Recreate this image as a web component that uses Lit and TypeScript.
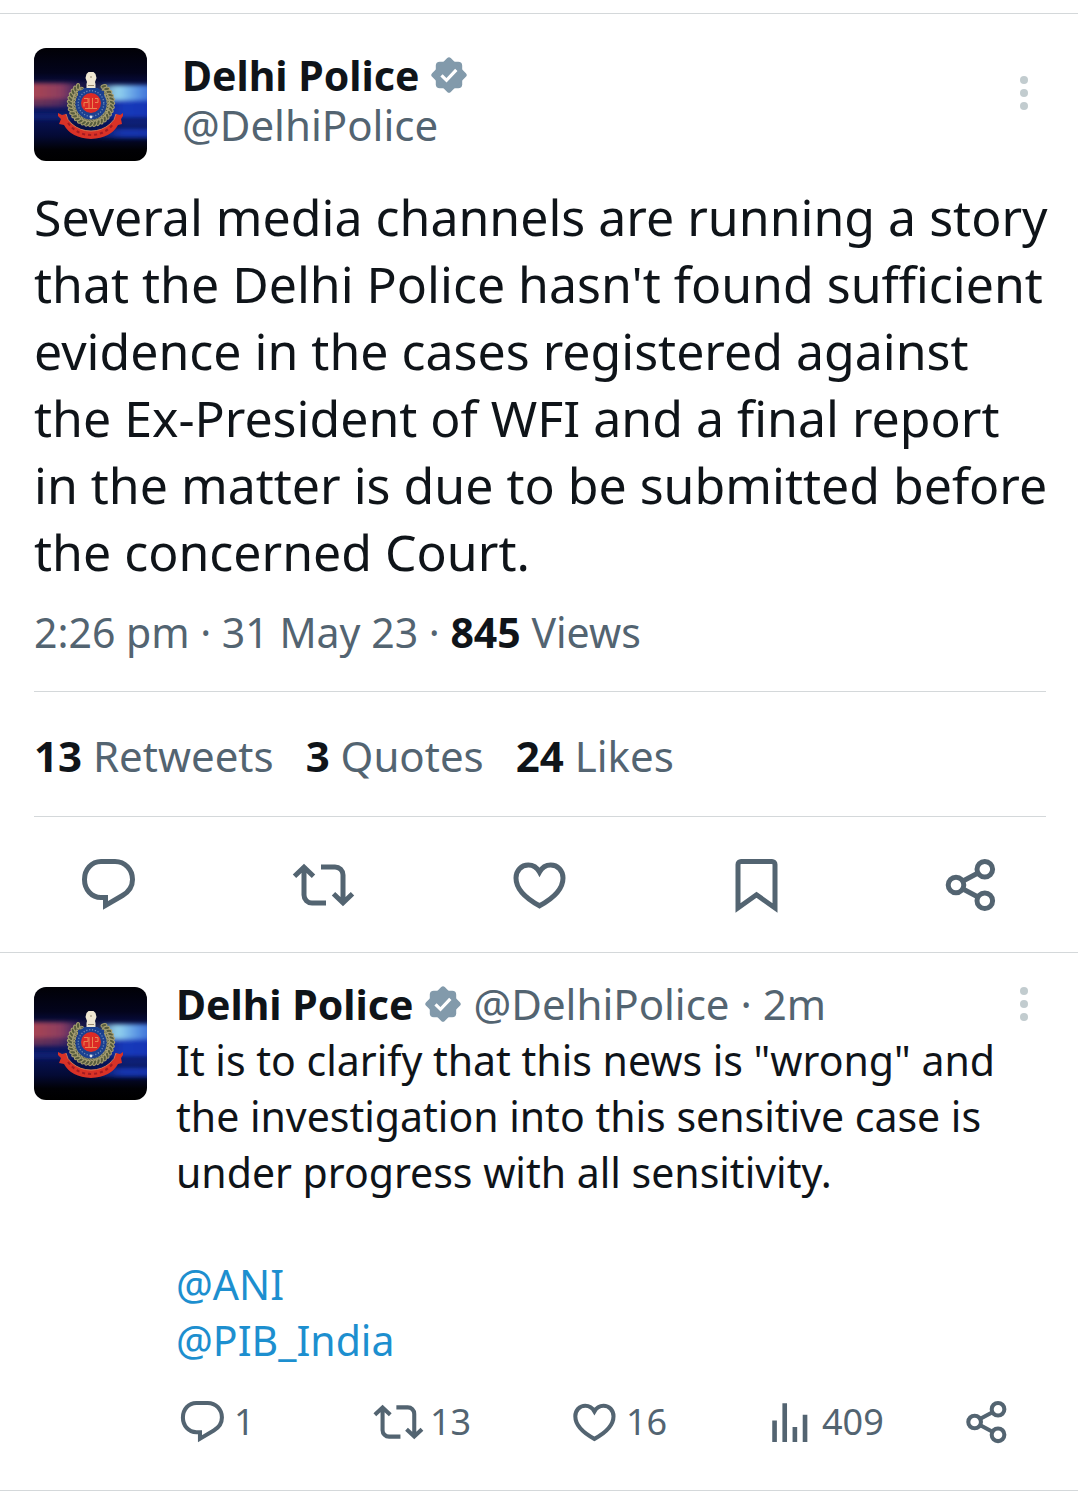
import { LitElement, html, svg, css } from "lit";
import { customElement, property } from "lit/decorators.js";

const icons: Record<string, unknown> = {
  reply: svg`<path d="M25 8.500h14c10 0 17.500 8 17.500 18 0 7.500-4 12.500-10 16L29.500 52.500v-8H25c-9.500 0-16.500-8-16.500-18s7-18 16.500-18z"/>`,
  retweet: svg`<path d="M35 50H21a8 8 0 0 1-8-8V15M3.500 23.200L13 14.300l9.500 8.900M30 14h14a8 8 0 0 1 8 8v27M42.500 40.800L52 49.700l9.500-8.900"/>`,
  like: svg`<path d="M32.500 19C30 14.500 26 12 21.300 12 14.300 12 9 17.500 9 25c0 11 10 20.500 23.500 27.800C46 45.500 56 36 56 25c0-7.500-5.300-13-12.300-13C39 12 35 14.500 32.500 19z"/>`,
  bookmark: svg`<path d="M15 55V11.500a3 3 0 0 1 3-3h31a3 3 0 0 1 3 3V55L33.500 41.800z"/>`,
  share: svg`<circle cx="18" cy="32" r="7.800"/><circle cx="46.800" cy="16.300" r="7.800"/><circle cx="46.800" cy="47.700" r="7.800"/><path d="M25 28l15-8M25 36l15 8"/>`,
  views: svg`<path d="M13 56.500V30M25.500 56.500V9M38 56.500V38M50.500 56.500V23" stroke-width="5.700"/>`,
};

@customElement("tweet-icon")
class TweetIcon extends LitElement {
  @property() name = "reply";
  static styles = css`
    :host { display: block; width: 64px; height: 64px; flex: none; }
    svg { display: block; width: 100%; height: 100%; fill: none; stroke: #536471; stroke-width: 5; stroke-miterlimit: 10; }
  `;
  render() {
    return html`<svg viewBox="0 0 64 64" aria-hidden="true">${icons[this.name]}</svg>`;
  }
}

@customElement("verified-badge")
class VerifiedBadge extends LitElement {
  static styles = css`
    :host { display: block; width: 36px; height: 36px; flex: none; }
    svg { display: block; width: 100%; height: 100%; }
  `;
  render() {
    return html`<svg viewBox="0 0 36 36" role="img" aria-label="Verified account">
      <g fill="#829aab">
        <rect x="4.800" y="4.800" width="26.400" height="26.400" rx="4"/>
        <rect x="4.800" y="4.800" width="26.400" height="26.400" rx="2.500" transform="rotate(45 18 18)"/>
      </g>
      <path d="M10.500 18.300l5 5L25.300 12.800" fill="none" stroke="#fff" stroke-width="3.200"/>
    </svg>`;
  }
}

@customElement("police-avatar")
class PoliceAvatar extends LitElement {
  static styles = css`
    :host { display: block; width: 113px; height: 113px; flex: none; border-radius: 12px; overflow: hidden; }
    svg { display: block; width: 100%; height: 100%; }
  `;
  render() {
    const leaves = Array.from({ length: 29 }, (_, i) => -52 + i * 10.14);
    return html`<svg viewBox="0 0 113 113" role="img" aria-label="Delhi Police emblem">
      <defs>
        <linearGradient id="sky" x2="0" y2="1">
          <stop offset="0" stop-color="#010106"/><stop offset=".22" stop-color="#03041c"/>
          <stop offset=".38" stop-color="#0a1258"/><stop offset=".58" stop-color="#081560"/>
          <stop offset=".78" stop-color="#040a34"/><stop offset=".9" stop-color="#010105"/>
          <stop offset="1" stop-color="#000"/>
        </linearGradient>
        <linearGradient id="red"><stop offset="0" stop-color="#b04850"/><stop offset=".6" stop-color="#8a3c60"/><stop offset="1" stop-color="#5b3a80" stop-opacity="0"/></linearGradient>
        <linearGradient id="cyan"><stop offset="0" stop-color="#8fc0ec" stop-opacity="0"/><stop offset=".35" stop-color="#9bdcf0"/><stop offset=".65" stop-color="#5a96e4"/><stop offset="1" stop-color="#2850cc"/></linearGradient>
        <linearGradient id="blue"><stop offset="0" stop-color="#1238b8" stop-opacity="0"/><stop offset=".5" stop-color="#1a40cc"/><stop offset="1" stop-color="#1238c0"/></linearGradient>
        <filter id="soft" x="-20%" y="-60%" width="140%" height="220%"><feGaussianBlur stdDeviation="4 2"/></filter>
        <filter id="fine"><feGaussianBlur stdDeviation=".4"/></filter>
      </defs>
      <rect width="113" height="113" fill="url(#sky)"/>
      <g filter="url(#soft)">
        <rect x="-8" y="35" width="62" height="16" fill="url(#red)"/>
        <rect x="-8" y="51" width="56" height="8" fill="url(#red)" opacity=".6"/>
        <rect x="58" y="37" width="68" height="16" fill="url(#cyan)"/>
        <rect x="52" y="52" width="74" height="18" fill="url(#blue)" opacity=".85"/>
        <rect x="60" y="73" width="66" height="4" fill="url(#blue)" opacity=".5"/>
        <rect x="50" y="80" width="76" height="10" fill="url(#blue)" opacity=".8"/>
        <rect x="-8" y="66" width="50" height="5" fill="#1a2d88" opacity=".6"/>
      </g>
      <g filter="url(#fine)">
        <circle cx="57" cy="55" r="19.500" fill="none" stroke="#10183c" stroke-width="7" opacity=".5"/>
        <g fill="#575c3e" stroke="#a8a070" stroke-width="1">
          ${leaves.map((a) => svg`<g transform="rotate(${a} 57 55)"><ellipse cx="78" cy="55" rx="3" ry="1.700" transform="rotate(38 78 55)"/><ellipse cx="74" cy="57" rx="1.700" ry="1" transform="rotate(-30 74 57)"/></g>`)}
        </g>
        <path d="M44 43q4 0 6-3h14q2 3 6 3v13H44z" fill="#1a4090"/>
        <circle cx="57" cy="56" r="15.500" fill="#1a4090"/>
        <circle cx="57" cy="55.500" r="12.800" fill="none" stroke="#6c88b8" stroke-width="1.300" stroke-dasharray="1.200 1.700"/>
        <circle cx="57" cy="55" r="10" fill="#dc2c28"/>
        <path d="M50 50.500h4v4h-4v4M55 50v10M58.500 50v10M61 50.500h3v4h-3M51 60.500h12" fill="none" stroke="#ea8450" stroke-width="1"/>
        <circle cx="57" cy="69" r="1.400" fill="#dbe3ec"/>
        <path d="M52.500 40v-4l.5-2-1.500-4 1-4 2-2h5l2 2 1 4-1.500 4 .5 2v4z" fill="#efe7d2"/>
        <path d="M56 29h2M54 37.500h6" stroke="#8f8068" stroke-width=".9" fill="none"/>
        <path d="M24 65l4 2 4-1q1 6 6 10 8 7 19 7t19-7q5-4 6-10l4 1 3-2v3l-2 3 1 5-4 1q-7 13-27 14-20-1-27-14l-5-1 2-5-3-3z" fill="#d83028"/>
        <path d="M34 75q9 12 23 12t23-12" fill="none" stroke="#a01a20" stroke-width="2" stroke-dasharray="3 3"/>
        <path d="M32 66q1 6 6 10 8 7 19 7t19-7q5-4 6-10" fill="none" stroke="#e98a58" stroke-width=".8"/>
      </g>
    </svg>`;
  }
}

@customElement("app-root")
class AppRoot extends LitElement {
  static styles = css`
    :host { display: block; background: #fff; color: #0f1419; font-family: "Noto Sans", "Open Sans", sans-serif; font-size: 42px; line-height: 56px; padding-top: 13px; }
    * { box-sizing: border-box; }
    h1, h2, p, ul { margin: 0; padding: 0; font-size: inherit; font-weight: inherit; }
    ul { list-style: none; }
    button { display: flex; align-items: center; border: 0; padding: 0; margin: 0; background: none; color: inherit; font: inherit; cursor: pointer; }
    a { color: inherit; text-decoration: none; }
    strong, .name { font-weight: 700; color: #0f1419; }
    .name { font-size: 41px; }
    .tweet { border-top: 1px solid #d4d8da; }
    .main { padding-top: 34px; }
    .head { display: flex; gap: 35px; padding: 0 34px; }
    .who { flex: 1; min-width: 0; line-height: 50px; padding-top: 2px; }
    .name-row { display: flex; align-items: center; gap: 12px; }
    .muted { color: #536471; }
    .more { flex-direction: column; gap: 5px; width: 40px; height: 56px; justify-content: center; }
    .more i { width: 8px; height: 8px; border-radius: 50%; background: #c2cccf; }
    .main .more { margin-top: 17px; }
    .text { font-size: 50px; line-height: 67px; padding: 23px 24px 0 34px; white-space: pre-line; }
    .meta { font-size: 41px; padding: 18px 34px 31px; }
    .stats { display: flex; gap: 32px; margin: 0 32px 0 34px; padding: 36px 0 32px; border: solid #d4d8da; border-width: 1px 0; }
    .actions { display: flex; padding: 36px 0 35px; }
    .actions li { flex: 1; display: flex; justify-content: center; }
    .reply { display: flex; gap: 29px; padding: 34px 34px 40px; border-bottom: 1px solid #d4d8da; }
    .body { flex: 1; min-width: 0; }
    .reply-head { display: flex; align-items: center; margin-top: -11px; }
    .reply-head .name-row { flex: 1; white-space: nowrap; }
    .reply-text { font-size: 41px; white-space: pre-line; }
    .link { color: #1d8fcf; }
    .counts { display: grid; grid-template-columns: repeat(4, 1fr) auto; padding: 26px 32px 0 0; font-size: 36px; color: #536471; }
    .counts button { gap: 6px; height: 56px; }
    .counts tweet-icon { width: 52px; height: 52px; }
  `;

  private more() {
    return html`<button class="more" aria-label="More options"><i></i><i></i><i></i></button>`;
  }

  render() {
    const actions = [["reply", "Reply"], ["retweet", "Retweet"], ["like", "Like"], ["bookmark", "Bookmark"], ["share", "Share"]];
    const counts = [["reply", "1"], ["retweet", "13"], ["like", "16"], ["views", "409"], ["share", ""]];
    return html`
      <article class="tweet main">
        <header class="head">
          <police-avatar></police-avatar>
          <div class="who">
            <div class="name-row"><h1 class="name">Delhi Police</h1><verified-badge></verified-badge></div>
            <a class="muted" href="#profile">@DelhiPolice</a>
          </div>
          ${this.more()}
        </header>
        <p class="text">Several media channels are running a story
that the Delhi Police hasn't found sufficient
evidence in the cases registered against
the Ex-President of WFI and a final report
in the matter is due to be submitted before
the concerned Court.</p>
        <p class="meta muted">2:26 pm · 31 May 23 · <strong>845</strong> Views</p>
        <ul class="stats muted">
          <li><strong>13</strong> Retweets</li>
          <li><strong>3</strong> Quotes</li>
          <li><strong>24</strong> Likes</li>
        </ul>
        <ul class="actions">
          ${actions.map(([name, label]) => html`<li><button aria-label=${label}><tweet-icon name=${name}></tweet-icon></button></li>`)}
        </ul>
      </article>
      <article class="tweet reply">
        <police-avatar></police-avatar>
        <div class="body">
          <header class="reply-head">
            <div class="name-row"><h2 class="name">Delhi Police</h2><verified-badge></verified-badge><span class="muted"><a href="#profile">@DelhiPolice</a> · 2m</span></div>
            ${this.more()}
          </header>
          <p class="reply-text">It is to clarify that this news is "wrong" and
the investigation into this sensitive case is
under progress with all sensitivity.

<a class="link" href="#ani">@ANI</a>
<a class="link" href="#pib">@PIB_India</a></p>
          <div class="counts">
            ${counts.map(([name, n]) => html`<button aria-label="${name} ${n}"><tweet-icon name=${name}></tweet-icon>${n ? html`<span>${n}</span>` : ""}</button>`)}
          </div>
        </div>
      </article>
    `;
  }
}
